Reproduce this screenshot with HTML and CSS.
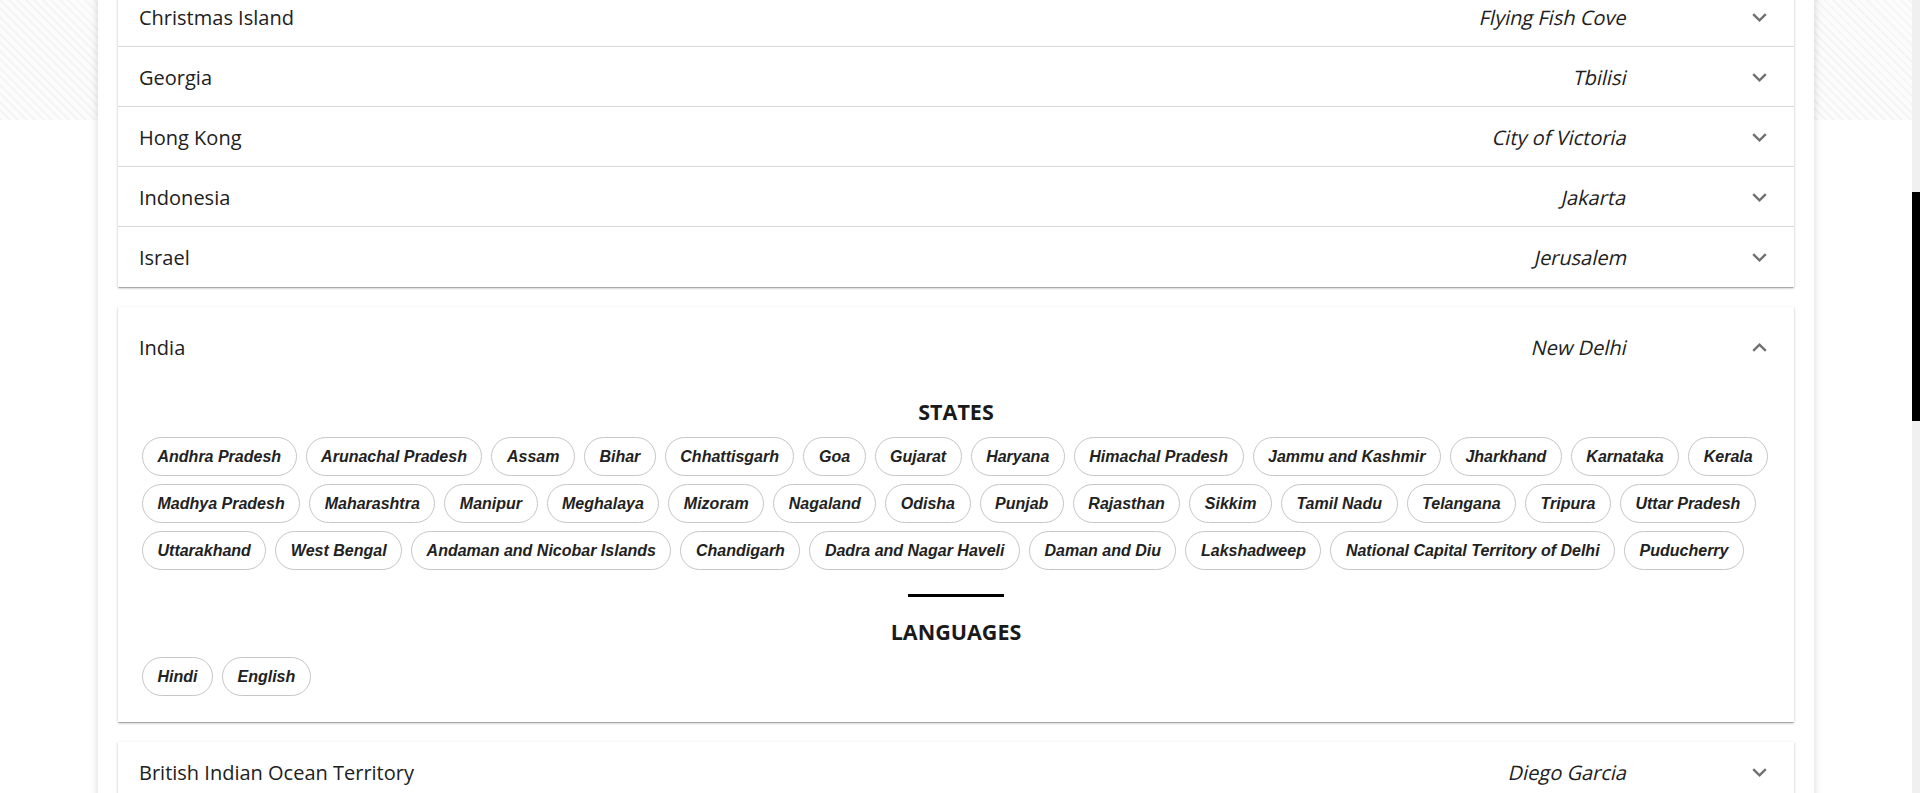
FILE: index.html
```html
<!DOCTYPE html>
<html lang="en">
<head>
<meta charset="utf-8">
<title>Countries</title>
<link rel="stylesheet" href="styles.css">
</head>
<body>
<div class="viewport">
  <main class="page">
    <div class="sheet">
      <div class="accordion">
        <section class="panel">
          <div class="summary"><span class="name">Christmas Island</span><span class="capital">Flying Fish Cove</span><svg class="chev" viewBox="0 0 15 9"><polyline points="1.2,1.2 7.5,7.3 13.8,1.2"/></svg></div>
        </section>
        <section class="panel">
          <div class="summary"><span class="name">Georgia</span><span class="capital">Tbilisi</span><svg class="chev" viewBox="0 0 15 9"><polyline points="1.2,1.2 7.5,7.3 13.8,1.2"/></svg></div>
        </section>
        <section class="panel">
          <div class="summary"><span class="name">Hong Kong</span><span class="capital">City of Victoria</span><svg class="chev" viewBox="0 0 15 9"><polyline points="1.2,1.2 7.5,7.3 13.8,1.2"/></svg></div>
        </section>
        <section class="panel">
          <div class="summary"><span class="name">Indonesia</span><span class="capital">Jakarta</span><svg class="chev" viewBox="0 0 15 9"><polyline points="1.2,1.2 7.5,7.3 13.8,1.2"/></svg></div>
        </section>
        <section class="panel">
          <div class="summary"><span class="name">Israel</span><span class="capital">Jerusalem</span><svg class="chev" viewBox="0 0 15 9"><polyline points="1.2,1.2 7.5,7.3 13.8,1.2"/></svg></div>
        </section>
        <section class="panel panel--open">
          <div class="summary"><span class="name">India</span><span class="capital">New Delhi</span><svg class="chev" viewBox="0 0 15 9"><polyline points="1.2,7.8 7.5,1.7 13.8,7.8"/></svg></div>
          <div class="details">
            <h3 class="section-title">STATES</h3>
            <ul class="chips">
              <li class="chip">Andhra Pradesh</li>
              <li class="chip">Arunachal Pradesh</li>
              <li class="chip">Assam</li>
              <li class="chip">Bihar</li>
              <li class="chip">Chhattisgarh</li>
              <li class="chip">Goa</li>
              <li class="chip">Gujarat</li>
              <li class="chip">Haryana</li>
              <li class="chip">Himachal Pradesh</li>
              <li class="chip">Jammu and Kashmir</li>
              <li class="chip">Jharkhand</li>
              <li class="chip">Karnataka</li>
              <li class="chip">Kerala</li>
              <li class="chip">Madhya Pradesh</li>
              <li class="chip">Maharashtra</li>
              <li class="chip">Manipur</li>
              <li class="chip">Meghalaya</li>
              <li class="chip">Mizoram</li>
              <li class="chip">Nagaland</li>
              <li class="chip">Odisha</li>
              <li class="chip">Punjab</li>
              <li class="chip">Rajasthan</li>
              <li class="chip">Sikkim</li>
              <li class="chip">Tamil Nadu</li>
              <li class="chip">Telangana</li>
              <li class="chip">Tripura</li>
              <li class="chip">Uttar Pradesh</li>
              <li class="chip">Uttarakhand</li>
              <li class="chip">West Bengal</li>
              <li class="chip">Andaman and Nicobar Islands</li>
              <li class="chip">Chandigarh</li>
              <li class="chip">Dadra and Nagar Haveli</li>
              <li class="chip">Daman and Diu</li>
              <li class="chip">Lakshadweep</li>
              <li class="chip">National Capital Territory of Delhi</li>
              <li class="chip">Puducherry</li>
            </ul>
            <hr class="rule">
            <h3 class="section-title">LANGUAGES</h3>
            <ul class="chips">
              <li class="chip">Hindi</li>
              <li class="chip">English</li>
            </ul>
          </div>
        </section>
        <section class="panel">
          <div class="summary"><span class="name">British Indian Ocean Territory</span><span class="capital">Diego Garcia</span><svg class="chev" viewBox="0 0 15 9"><polyline points="1.2,1.2 7.5,7.3 13.8,1.2"/></svg></div>
        </section>
      </div>
    </div>
  </main>
  <div class="scrollbar"><div class="thumb"></div></div>
</div>
</body>
</html>
```
FILE: styles.css
```css
html, body {
  margin: 0;
  height: 100%;
  overflow: hidden;
}
body {
  font-family: "Open Sans", "Noto Sans", sans-serif;
  color: #212121;
  background: #fff;
}
.viewport {
  display: flex;
  height: 793px;
}
.page {
  flex: 1;
  height: 100%;
  overflow: hidden;
  background: repeating-linear-gradient(45deg, #f5f5f5 0 2px, #fcfcfc 2px 6px) left top / 100% 120px no-repeat, #fff;
}
.sheet {
  width: 1716px;
  min-height: 100%;
  margin: 0 auto;
  padding: 0 20px;
  box-sizing: border-box;
  background: #fff;
  box-shadow: 0 0 8px rgba(0, 0, 0, 0.16);
}
.accordion {
  margin-top: -13px;
}
.panel {
  position: relative;
  background: #fff;
  box-shadow: 0 1px 3px 0 rgba(0, 0, 0, 0.2), 0 1px 1px 0 rgba(0, 0, 0, 0.14), 0 2px 1px -1px rgba(0, 0, 0, 0.12);
}
.panel + .panel::before {
  content: "";
  position: absolute;
  top: -1px;
  left: 0;
  right: 0;
  height: 1px;
  background: rgba(0, 0, 0, 0.12);
}
.panel--open {
  margin: 20px 0;
}
.panel.panel--open::before,
.panel--open + .panel::before {
  display: none;
}
.summary {
  display: flex;
  align-items: center;
  height: 60px;
  padding: 0 27px 0 21px;
}
.panel--open .summary {
  height: 80px;
}
.name {
  flex: 1;
  font-size: 20px;
}
.capital {
  display: inline-block;
  font-size: 20px;
  transform: skewX(-13deg);
  transform-origin: 50% 70%;
}
.chev {
  width: 15px;
  height: 9px;
  margin-left: 126px;
  fill: none;
  stroke: #707070;
  stroke-width: 2.4;
}
.details {
  padding: 10px 24px 26px;
}
.section-title {
  margin: 0 0 10px;
  text-align: center;
  font-size: 21.5px;
  font-weight: 700;
  line-height: 30px;
  color: #1a1a1a;
}
.chips {
  list-style: none;
  margin: 0 -10px 0 0;
  padding: 0;
  display: flex;
  flex-wrap: wrap;
  gap: 8px 9px;
}
.chip {
  height: 39px;
  box-sizing: border-box;
  display: flex;
  align-items: center;
  padding: 0 14.5px;
  border: 1px solid #c6c6c6;
  border-radius: 20px;
  font: italic 700 16px "Liberation Sans", Arial, sans-serif;
  color: #222;
  background: #fff;
}
.rule {
  width: 96px;
  height: 3px;
  margin: 24px auto 20px;
  border: 0;
  background: #000;
}
.scrollbar {
  flex: none;
  width: 8px;
  background: #f0f0f0;
}
.thumb {
  margin-top: 192px;
  height: 229px;
  background: #000;
}
```
